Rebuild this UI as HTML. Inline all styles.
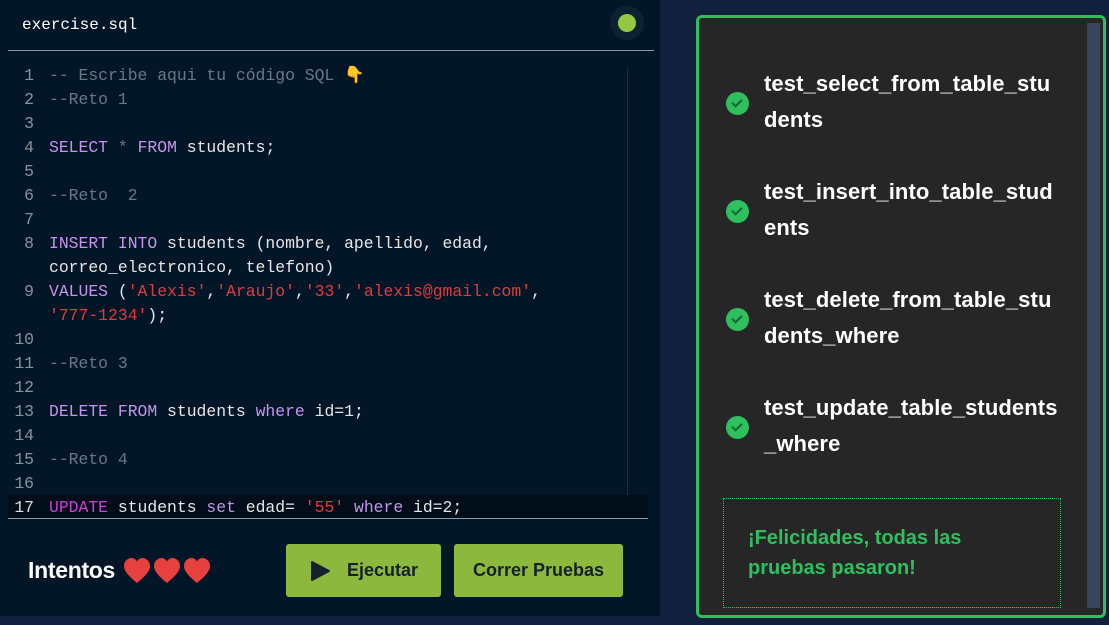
<!DOCTYPE html>
<html><head><meta charset="utf-8"><style>
body{margin:0;width:1109px;height:625px;background:#13203d;overflow:hidden;position:relative;font-family:"Liberation Sans",sans-serif}
#left{position:absolute;left:0;top:0;width:660px;height:616px;background:#031628}
.hdr{position:absolute;left:22px;top:16px;color:#fff;font:16px "Liberation Mono",monospace}
.hl{position:absolute;left:8px;top:50px;width:646px;height:1px;background:#8b98a8}
.dot{position:absolute;left:610px;top:6px;width:34px;height:34px;border-radius:50%;background:#0c2233}
.dot:after{content:"";position:absolute;left:8px;top:8px;width:18px;height:18px;border-radius:50%;background:#94c843}
.code{position:absolute;left:0;top:64px;font:16.4px/24px "Liberation Mono",monospace;color:#e6e6e6;white-space:pre}
.ln{display:inline-block;width:34px;text-align:right;color:#8a929c;margin-right:15px}
.c{color:#6b7785}.k{color:#c792ea}.u{color:#d23ed8}.s{color:#e33b3b}
.vl{position:absolute;left:627px;top:68px;width:1px;height:450px;background:#1d2c3c}
.cur{position:absolute;left:8px;top:495px;width:640px;height:23px;background:#010e1a}
.bl{position:absolute;left:8px;top:518px;width:640px;height:1px;background:#8b98a8}
.btn{position:absolute;top:544px;height:53px;background:#8cb83e;border-radius:3px;color:#16202e;font-weight:bold;font-size:18px;display:flex;align-items:center;justify-content:center}
#panel{position:absolute;left:696px;top:15px;width:404px;height:597px;border:3px solid #2fbf5f;border-radius:6px;background:#262626}
.sb{position:absolute;right:3px;top:5px;width:13px;height:585px;background:#394558}
.it{position:absolute;left:65px;color:#fff;font-weight:bold;font-size:22px;line-height:36px;letter-spacing:0.1px}
.ck{position:absolute;left:27px;width:23px;height:23px;border-radius:50%;background:#2fbf5f}
.ck:after{content:"";position:absolute;left:8px;top:5px;width:4px;height:8px;border:solid #163;border-width:0 2px 2px 0;transform:rotate(45deg)}
.ok{position:absolute;left:24px;top:480px;width:338px;height:110px;border:1px dotted #2fbf5f;color:#2fbf5f;font-weight:bold;font-size:20px;line-height:30px;padding:24px 0 0 24px;box-sizing:border-box}
</style></head><body>
<div id="left">
<div class="hdr">exercise.sql</div><div class="dot"></div><div class="hl"></div>
<div class="vl"></div><div class="cur"></div>
<div class="code"><span class="ln">1</span><span class="c">-- Escribe aqui tu código SQL </span><span style="color:#e8a93a">👇</span>
<span class="ln">2</span><span class="c">--Reto 1</span>
<span class="ln">3</span>
<span class="ln">4</span><span class="k">SELECT</span> <span class="c">*</span> <span class="k">FROM</span> students;
<span class="ln">5</span>
<span class="ln">6</span><span class="c">--Reto  2</span>
<span class="ln">7</span>
<span class="ln">8</span><span class="k">INSERT INTO</span> students (nombre, apellido, edad,
<span class="ln"></span>correo_electronico, telefono)
<span class="ln">9</span><span class="k">VALUES</span> (<span class="s">'Alexis'</span>,<span class="s">'Araujo'</span>,<span class="s">'33'</span>,<span class="s">'alexis@gmail.com'</span>,
<span class="ln"></span><span class="s">'777-1234'</span>);
<span class="ln">10</span>
<span class="ln">11</span><span class="c">--Reto 3</span>
<span class="ln">12</span>
<span class="ln">13</span><span class="k">DELETE FROM</span> students <span class="k">where</span> id=1;
<span class="ln">14</span>
<span class="ln">15</span><span class="c">--Reto 4</span>
<span class="ln">16</span>
<span class="ln" style="color:#ddd">17</span><span class="u">UPDATE</span> students <span class="k">set</span> edad= <span class="s">'55'</span> <span class="k">where</span> id=2;</div>
<div class="bl"></div>
<div style="position:absolute;left:28px;top:557px;color:#fff;font-weight:bold;font-size:23px;letter-spacing:-0.3px">Intentos</div>
<svg style="position:absolute;left:123px;top:558px" width="90" height="26" viewBox="0 0 90 26"><g fill="#e8403f"><path id="h" d="M14 25 C8 20 1 14 1 8 C1 3 5 0 8.5 0 C11 0 13 1.5 14 3.5 C15 1.5 17 0 19.5 0 C23 0 27 3 27 8 C27 14 20 20 14 25Z"/><use href="#h" x="30"/><use href="#h" x="60"/></g></svg>
<div class="btn" style="left:286px;width:155px"><svg width="22" height="22" viewBox="0 0 22 22" style="margin-right:16px"><path d="M3 2 L20 11 L3 20 Z" fill="#16202e" stroke="#16202e" stroke-width="2" stroke-linejoin="round"/></svg>Ejecutar</div>
<div class="btn" style="left:454px;width:169px">Correr Pruebas</div>
</div>
<div id="panel">
<div class="sb"></div>
<div class="ck" style="top:74px"></div><div class="it" style="top:48px">test_select_from_table_stu<br>dents</div>
<div class="ck" style="top:182px"></div><div class="it" style="top:156px">test_insert_into_table_stud<br>ents</div>
<div class="ck" style="top:290px"></div><div class="it" style="top:264px">test_delete_from_table_stu<br>dents_where</div>
<div class="ck" style="top:398px"></div><div class="it" style="top:372px">test_update_table_students<br>_where</div>
<div class="ok">¡Felicidades, todas las<br>pruebas pasaron!</div>
</div>
</body></html>
